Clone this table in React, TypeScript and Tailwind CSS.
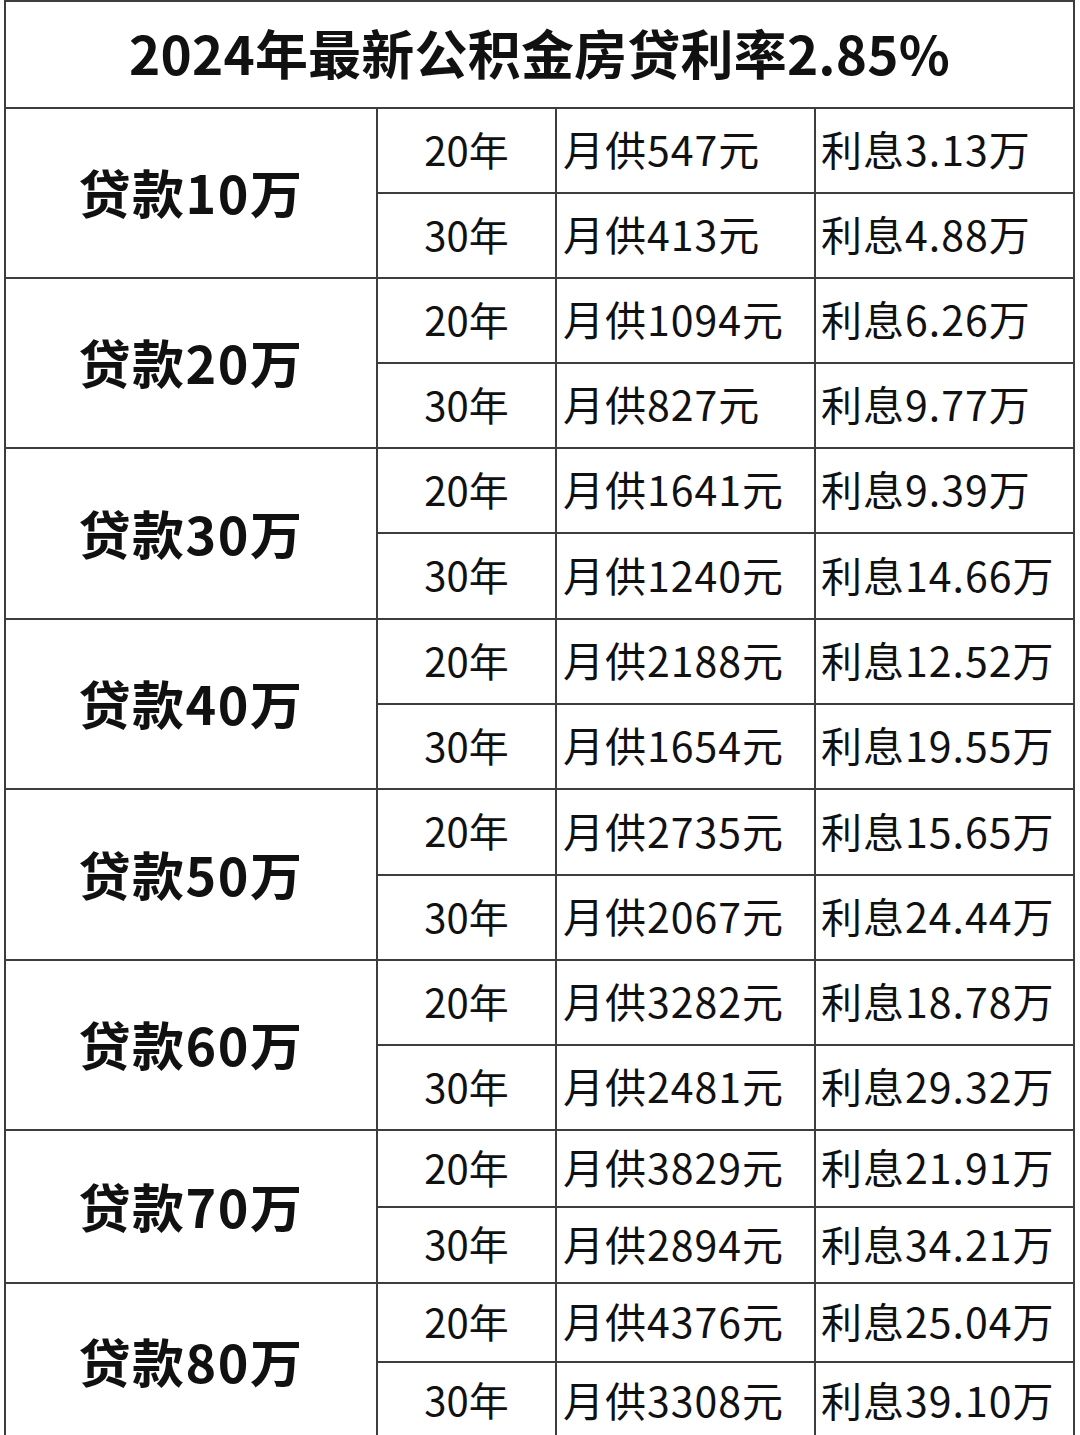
const rows = [
  { amount: '10', lines: [['547', '3.13'], ['413', '4.88']], h: [85, 85] },
  { amount: '20', lines: [['1094', '6.26'], ['827', '9.77']], h: [85, 85] },
  { amount: '30', lines: [['1641', '9.39'], ['1240', '14.66']], h: [85, 86] },
  { amount: '40', lines: [['2188', '12.52'], ['1654', '19.55']], h: [85, 85] },
  { amount: '50', lines: [['2735', '15.65'], ['2067', '24.44']], h: [86, 85] },
  { amount: '60', lines: [['3282', '18.78'], ['2481', '29.32']], h: [85, 85] },
  { amount: '70', lines: [['3829', '21.91'], ['2894', '34.21']], h: [77, 76] },
  { amount: '80', lines: [['4376', '25.04'], ['3308', '39.10']], h: [79, 78] },
]

const font = { fontFamily: '"Noto Sans CJK SC", "Noto Sans", sans-serif' }

const App = () => {
  return (
    <div className="min-h-[1435px] w-[1080px] overflow-hidden bg-white text-[#111]" style={font}>
      <div className="ml-[4px] w-[1071px] border-x-2 border-t-2 border-[#3d3d3d]">
        <div className="flex h-[107px] items-center justify-center border-b-2 border-[#3d3d3d] pb-[4px] text-[53px] leading-none font-bold tracking-[0.2px]">
          2024年最新公积金房贷利率2.85%
        </div>
        {rows.map((group) => (
          <div key={group.amount} className="flex border-b-2 border-[#3d3d3d]">
            <div className="flex w-[372px] shrink-0 items-center justify-center border-r-2 border-[#3d3d3d] pb-[2px] text-[52px] leading-none font-bold tracking-[1.5px]">
              贷款{group.amount}万
            </div>
            <div className="flex flex-1 flex-col">
              {group.lines.map(([pay, interest], i) => (
                <div
                  key={i}
                  className={
                    i === 0
                      ? 'flex border-b-2 border-[#3d3d3d]'
                      : 'flex'
                  }
                  style={{ height: i === 0 ? group.h[0] : group.h[1] - 2 }}
                >
                  <div className="flex w-[179px] shrink-0 items-center justify-center border-r-2 border-[#3d3d3d] pb-[4px] text-[40px] leading-none">
                    {i === 0 ? '20年' : '30年'}
                  </div>
                  <div className="flex w-[259px] shrink-0 items-center border-r-2 border-[#3d3d3d] pb-[4px] pl-[6px] text-[41px] leading-none tracking-[1px] whitespace-nowrap">
                    月供{pay}元
                  </div>
                  <div className="flex flex-1 items-center pb-[4px] pl-[5px] text-[41px] leading-none tracking-[1px] whitespace-nowrap">
                    利息{interest}万
                  </div>
                </div>
              ))}
            </div>
          </div>
        ))}
      </div>
    </div>
  )
}

export default App
